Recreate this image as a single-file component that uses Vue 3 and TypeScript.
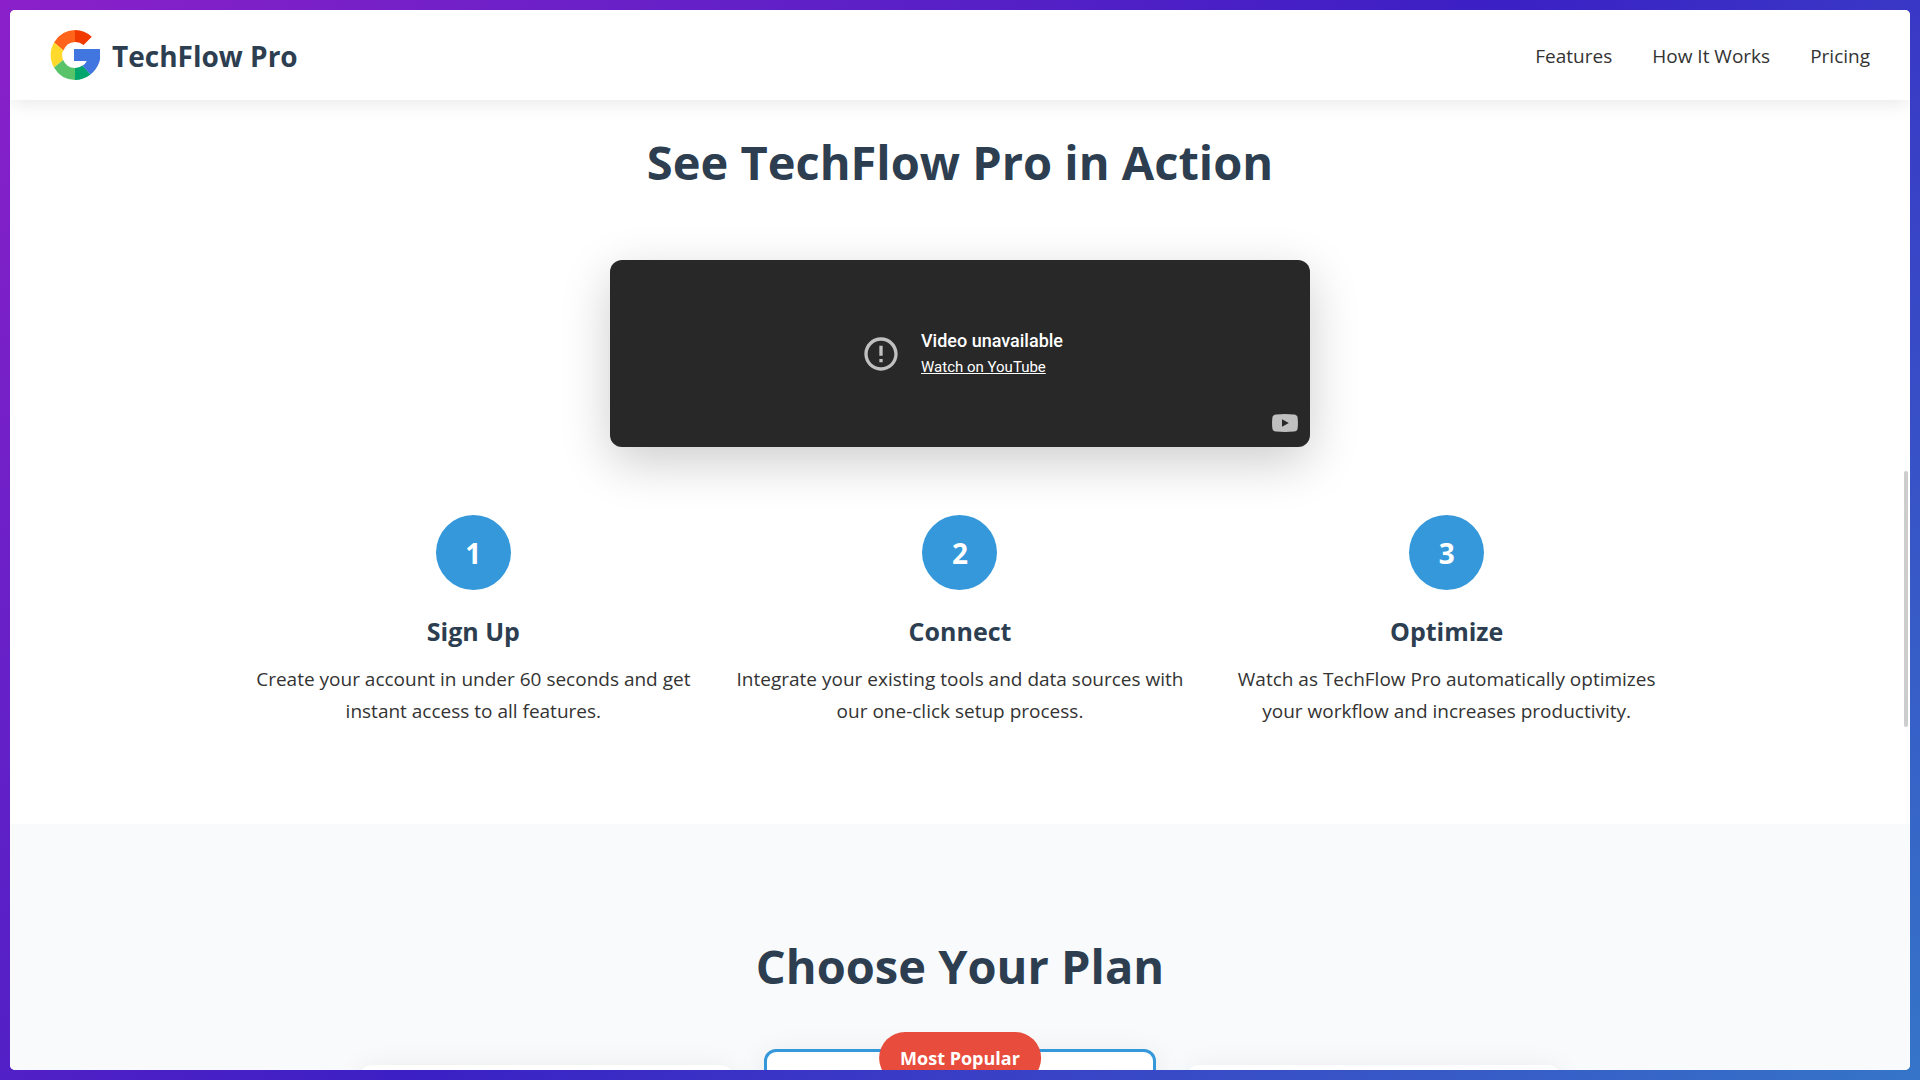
<script setup lang="ts">
interface Step {
  title: string
  lines: string[]
}

const links = [
  { label: 'Features', href: '#features' },
  { label: 'How It Works', href: '#how-it-works' },
  { label: 'Pricing', href: '#pricing' },
]

const steps: Step[] = [
  { title: 'Sign Up', lines: ['Create your account in under 60 seconds and get', 'instant access to all features.'] },
  { title: 'Connect', lines: ['Integrate your existing tools and data sources with', 'our one-click setup process.'] },
  { title: 'Optimize', lines: ['Watch as TechFlow Pro automatically optimizes', 'your workflow and increases productivity.'] },
]
</script>

<template>
  <div class="backdrop">
    <div class="window">
      <header class="header">
        <div class="brand">
          <svg class="logo" viewBox="0 0 50 50" aria-hidden="true">
            <path fill="#ff641a" d="M25 0A25 25 0 0 0 4 12.5L13.5 20.5A13 13 0 0 1 25 12Z" />
            <path fill="#f03a00" d="M25 0A25 25 0 0 1 41.8 6.8L33.6 15A13 13 0 0 0 25 12Z" />
            <path fill="#ffda2d" d="M4 12.5A25 25 0 0 0 4 37.5L13.2 30A13 13 0 0 1 13.2 20Z" />
            <path fill="#59c36a" d="M4 37.5A25 25 0 0 0 25 50V38A13 13 0 0 1 13.2 30Z" />
            <path fill="#00a66c" d="M25 50A25 25 0 0 0 40.5 44.5L32.6 35.6A13 13 0 0 1 25 38Z" />
            <path fill="#4175df" d="M24 19H49.8A25 25 0 0 1 40.5 44.5L32.6 35.8A13 13 0 0 0 36.8 31H24Z" />
          </svg>
          <span class="name">TechFlow Pro</span>
        </div>
        <nav class="nav">
          <a v-for="link in links" :key="link.label" :href="link.href">{{ link.label }}</a>
        </nav>
      </header>

      <section id="how-it-works" class="action">
        <h2>See TechFlow Pro in Action</h2>
        <div class="video">
          <svg class="alert" viewBox="0 0 24 24" aria-hidden="true">
            <path fill="#c0c0c0" d="M11 15h2v2h-2zm0-8h2v6h-2zm.99-5C6.47 2 2 6.48 2 12s4.47 10 9.99 10C17.52 22 22 17.52 22 12S17.52 2 11.99 2zM12 20c-4.42 0-8-3.58-8-8s3.58-8 8-8 8 3.58 8 8-3.58 8-8 8z" />
          </svg>
          <div class="message">
            <p class="reason">Video unavailable</p>
            <a href="#watch">Watch on YouTube</a>
          </div>
          <svg class="youtube" viewBox="0 0 26 18" aria-hidden="true">
            <path fill="#c0c0c0" fill-rule="evenodd" d="M4 .4Q13 -.4 22 .4Q25.2 .6 25.6 3.5Q26.3 9 25.6 14.5Q25.2 17.4 22 17.6Q13 18.4 4 17.6Q.8 17.4 .4 14.5Q-.3 9 .4 3.5Q.8 .6 4 .4ZM10 5.3V12.7L16.8 9Z" />
          </svg>
        </div>
        <div class="steps">
          <article v-for="(step, i) in steps" :key="step.title" class="step">
            <div class="number">{{ i + 1 }}</div>
            <h3>{{ step.title }}</h3>
            <p><span v-for="line in step.lines" :key="line">{{ line }}</span></p>
          </article>
        </div>
      </section>

      <section id="pricing" class="pricing">
        <h2>Choose Your Plan</h2>
        <div class="plans">
          <div class="plan"></div>
          <div class="plan popular"><span class="badge">Most Popular</span></div>
          <div class="plan"></div>
        </div>
      </section>

      <div class="scrollbar"></div>
    </div>
  </div>
</template>

<style>
body {
  margin: 0;
}
</style>

<style scoped>
* {
  box-sizing: border-box;
}

.backdrop {
  height: 100vh;
  padding: 10px;
  background: linear-gradient(135deg, #8b20c9 0%, #3b20c5 50%, #3575c8 100%);
  font-family: 'Segoe UI', 'Open Sans', 'Noto Sans', sans-serif;
  font-size: 19px;
  line-height: 32px;
  color: #333;
}

.window {
  position: relative;
  display: flex;
  flex-direction: column;
  height: 100%;
  overflow: hidden;
  border-radius: 5px;
  background: #fff;
}

h2,
h3,
p {
  margin: 0;
}

.header {
  z-index: 1;
  flex: none;
  display: flex;
  align-items: center;
  justify-content: space-between;
  padding: 20px 40px;
  background: #fff;
  box-shadow: 0 2px 20px rgba(0, 0, 0, 0.1);
}

.brand {
  display: flex;
  align-items: center;
  gap: 12px;
}

.logo {
  width: 50px;
  height: 50px;
}

.name {
  padding-top: 2px;
  font-size: 28px;
  font-weight: 700;
  color: #2c3e50;
}

.nav {
  display: flex;
  gap: 40px;
  padding-top: 2px;
}

.nav a {
  color: #333;
  text-decoration: none;
}

h2 {
  font-size: 47px;
  line-height: 84px;
  font-weight: 700;
  text-align: center;
  color: #2c3e50;
}

.action {
  flex: none;
  display: flex;
  flex-direction: column;
  align-items: center;
  padding: 20px 40px 97px;
}

.video {
  position: relative;
  display: flex;
  align-items: center;
  gap: 20px;
  width: 100%;
  max-width: 700px;
  height: 187px;
  margin-top: 56px;
  padding-left: 251px;
  border-radius: 12px;
  background: #282828;
  box-shadow: 0 15px 50px rgba(0, 0, 0, 0.2);
  font-family: Roboto, sans-serif;
}

.alert {
  width: 40px;
  height: 40px;
}

.message {
  font-size: 15px;
  line-height: 26px;
}

.message a {
  color: #fff;
}

.reason {
  font-size: 18px;
  font-weight: 500;
  color: #fff;
}

.youtube {
  position: absolute;
  right: 12px;
  bottom: 15px;
  width: 26px;
  height: 18px;
}

.steps {
  display: grid;
  grid-template-columns: repeat(3, minmax(0, 1fr));
  gap: 60px;
  width: 100%;
  max-width: 1400px;
  margin-top: 68px;
}

.step {
  display: flex;
  flex-direction: column;
  align-items: center;
  text-align: center;
}

.number {
  display: flex;
  align-items: center;
  justify-content: center;
  width: 75px;
  height: 75px;
  border-radius: 50%;
  background: #3498db;
  font-size: 28px;
  font-weight: 700;
  color: #fff;
}

h3 {
  margin-top: 21px;
  font-size: 25px;
  line-height: 40px;
  color: #2c3e50;
}

.step p {
  margin-top: 12px;
}

.step span {
  display: block;
  white-space: nowrap;
}

.pricing {
  flex: none;
  padding: 100px 40px;
  background: #f8fafc;
}

.plans {
  display: grid;
  grid-template-columns: repeat(3, minmax(0, 1fr));
  gap: 40px;
  max-width: 1200px;
  margin: 57px auto 0;
}

.plan {
  height: 320px;
  border-radius: 12px;
  background: #fff;
  box-shadow: 0 5px 30px rgba(0, 0, 0, 0.08);
}

.popular {
  position: relative;
  margin: -16px -9px;
  height: 352px;
  border: 3px solid #3498db;
}

.badge {
  position: absolute;
  top: -20px;
  left: 50%;
  padding: 10px 21px;
  border-radius: 26px;
  transform: translateX(-50%);
  background: #e74c3c;
  font-size: 18px;
  font-weight: 700;
  white-space: nowrap;
  color: #fff;
}

.scrollbar {
  position: absolute;
  z-index: 2;
  top: 461px;
  right: 2px;
  width: 4px;
  height: 256px;
  border-radius: 2px;
  background: #cdcdcd;
}
</style>
